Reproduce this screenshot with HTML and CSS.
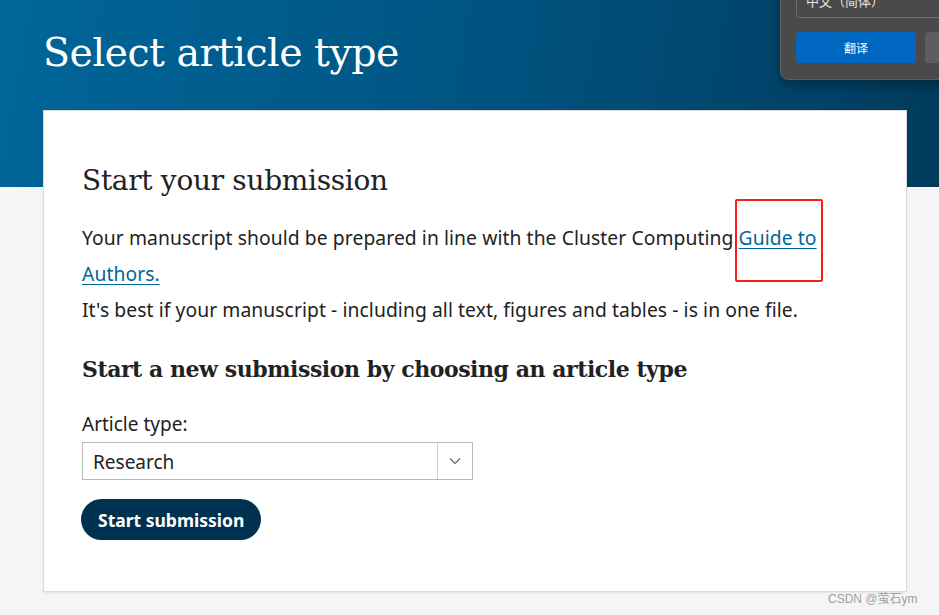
FILE: index.html
```html
<!DOCTYPE html>
<html lang="en">
<head>
<meta charset="utf-8">
<title>Select article type</title>
<link rel="stylesheet" href="styles.css">
</head>
<body>
<header class="hero">
  <h1 class="hero-title">Select article type</h1>
</header>
<main class="card">
  <h2 class="card-title">Start your submission</h2>
  <p class="intro">Your manuscript should be prepared in line with the Cluster Computing <a class="guide" href="#">Guide to Authors.</a></p>
  <p class="intro">It's best if your manuscript - including all text, figures and tables - is in one file.</p>
  <h3 class="sub-title">Start a new submission by choosing an article type</h3>
  <label class="field-label">Article type:</label>
  <div class="select">
    <span class="select-value">Research</span>
    <span class="select-arrow"><svg width="12" height="8" viewBox="0 0 12 8"><path d="M1 1.5 L6 6.5 L11 1.5" fill="none" stroke="#666" stroke-width="1.2"/></svg></span>
  </div>
  <button class="start-btn">Start submission</button>
</main>
<div class="highlight"></div>
<div class="translate-pop">
  <div class="lang-box">中文（简体）</div>
  <div class="pop-buttons">
    <span class="pop-primary">翻译</span>
    <span class="pop-secondary"></span>
  </div>
</div>
<div class="watermark">CSDN @萤石ym</div>
</body>
</html>
```
FILE: styles.css
```css
html, body { margin: 0; padding: 0; }
body {
  background: #f5f5f5;
  font-family: "Noto Sans", "Open Sans", sans-serif;
  color: #222;
  width: 939px;
  height: 615px;
  overflow: hidden;
  position: relative;
}
.hero {
  height: 187px;
  background: linear-gradient(100deg, #006699 0%, #005685 45%, #003b5c 100%);
  padding: 0 43px;
  box-sizing: border-box;
}
.hero-title {
  margin: 0;
  padding-top: 26px;
  font-family: "DejaVu Serif", serif;
  font-weight: normal;
  font-size: 39.5px;
  line-height: 52px;
  color: #fff;
  letter-spacing: -0.5px;
}
.card {
  position: relative;
  margin: -77px 32px 0 43px;
  height: 482px;
  box-sizing: border-box;
  background: #fff;
  border: 1px solid #dcdcdc;
  box-shadow: 0 1px 2px rgba(0,0,0,0.08);
  padding: 50px 38px 0 38px;
}
.card-title {
  margin: 0 0 19px;
  font-family: "DejaVu Serif", serif;
  font-weight: normal;
  font-size: 28px;
  line-height: 40px;
  color: #222;
  letter-spacing: -0.3px;
}
.intro {
  margin: 0;
  font-size: 19.3px;
  line-height: 36px;
  color: #222;
  letter-spacing: 0.08px;
}
.guide {
  color: #006699;
  text-decoration: underline;
  text-underline-offset: 3px;
}
.sub-title {
  margin: 25px 0 26px;
  font-family: "DejaVu Serif", serif;
  font-weight: bold;
  font-size: 22px;
  line-height: 32px;
  color: #222;
  letter-spacing: -0.45px;
}
.field-label {
  display: block;
  font-size: 19px;
  line-height: 26px;
  margin-bottom: 5px;
}
.select {
  display: flex;
  width: 391px;
  height: 38px;
  box-sizing: border-box;
  border: 1px solid #b9b9b9;
  align-items: stretch;
}
.select-value {
  flex: 1;
  padding-left: 10px;
  font-size: 19px;
  line-height: 38px;
  color: #222;
}
.select-arrow {
  width: 34px;
  border-left: 1px solid #d0d0d0;
  display: flex;
  align-items: center;
  justify-content: center;
}
.start-btn {
  display: block;
  margin-top: 19px;
  margin-left: -1px;
  height: 41px;
  padding: 0 17px;
  border: none;
  border-radius: 21px;
  background: #00324f;
  color: #fff;
  font-family: "Noto Sans", sans-serif;
  font-weight: bold;
  font-size: 17.5px;
}
.highlight {
  position: absolute;
  left: 735px;
  top: 199px;
  width: 84px;
  height: 79px;
  border: 2px solid #ff1a1a;
  border-radius: 2px;
}
.translate-pop {
  position: absolute;
  left: 780px;
  top: -20px;
  width: 180px;
  height: 100px;
  background: #4a4a4a;
  border-radius: 8px;
  border: 1px solid #5e5e5e;
  box-shadow: 0 4px 14px rgba(0,0,0,0.35);
  box-sizing: border-box;
  padding: 0 0 0 15px;
}
.lang-box {
  height: 37px;
  border: 1px solid #6e6e6e;
  border-radius: 4px;
  box-sizing: border-box;
  color: #e8e8e8;
  font-family: "Noto Sans CJK SC", sans-serif;
  font-size: 13px;
  line-height: 22px;
  padding: 8px 0 0 9px;
}
.pop-buttons {
  display: flex;
  gap: 9px;
  margin-top: 14px;
}
.pop-primary {
  width: 120px;
  height: 31px;
  background: #0067c0;
  border-radius: 4px;
  color: #fff;
  font-family: "Noto Sans CJK SC", sans-serif;
  font-size: 12px;
  line-height: 31px;
  text-align: center;
}
.pop-secondary {
  flex: 1;
  height: 31px;
  background: #5e5e5e;
  border-radius: 4px;
}
.watermark {
  position: absolute;
  left: 828px;
  top: 589px;
  font-family: "Liberation Sans", "Noto Sans CJK SC", sans-serif;
  font-size: 12px;
  color: #a0a0a0;
}
```
